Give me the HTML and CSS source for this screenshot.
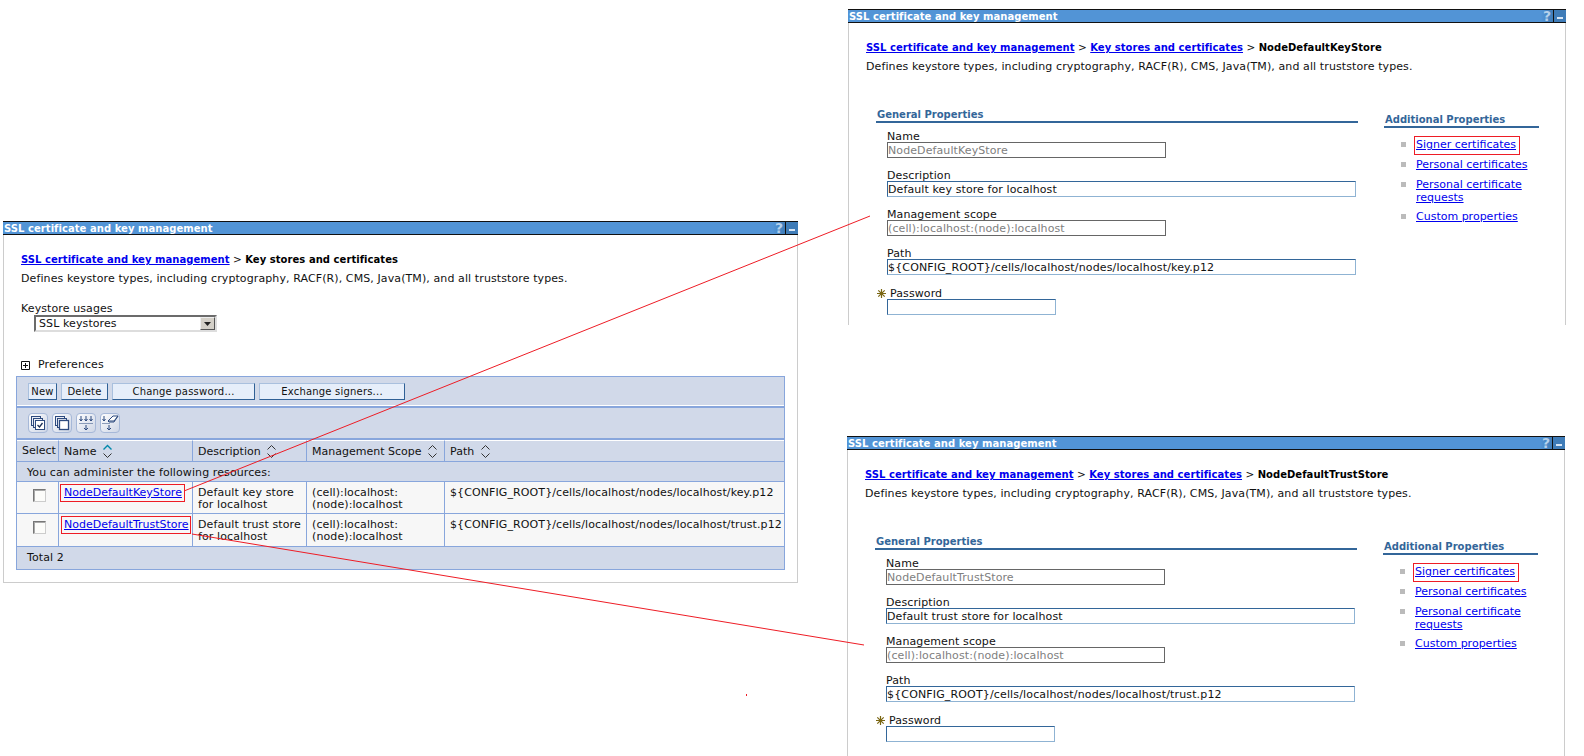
FILE: index.html
```html
<!DOCTYPE html>
<html lang="en">
<head>
<meta charset="utf-8">
<title>SSL certificate and key management</title>
<link rel="stylesheet" href="styles.css">
</head>
<body>
<svg width="0" height="0" class="defs">
  <defs>
    <symbol id="sort" viewBox="0 0 9 15"><path d="M.5 5.500 4.500 1.500l4 4M.5 9.500l4 4 4-4" fill="none" stroke="#333" stroke-width="1"/></symbol>
    <symbol id="sort-on" viewBox="0 0 9 15"><path d="M.5 5.500 4.500 1.500l4 4" fill="none" stroke="#08a" stroke-width="1.400"/><path d="M.5 9.500l4 4 4-4" fill="none" stroke="#333" stroke-width="1"/></symbol>
    <symbol id="star" viewBox="0 0 9 9"><path d="M4.500 0v9M0 4.500h9M1.300 1.300l6.400 6.400M7.700 1.300 1.300 7.700" stroke="#7a6612" stroke-width="1.200"/></symbol>
  </defs>
</svg>

<section class="panel panel-list">
  <header class="titlebar"><span class="title">SSL certificate and key management</span><span class="help">?</span><span class="min"></span></header>
  <div class="body">
    <p class="crumb"><a href="#">SSL certificate and key management</a> &gt; <b>Key stores and certificates</b></p>
    <p class="desc">Defines keystore types, including cryptography, RACF(R), CMS, Java(TM), and all truststore types.</p>
    <div class="usage-label">Keystore usages</div>
    <div class="select"><span class="select-text">SSL keystores</span><span class="select-btn"><svg width="7" height="4" viewBox="0 0 7 4"><path d="M0 0h7L3.500 4z" fill="#222"/></svg></span></div>
    <div class="prefs"><svg class="prefs-box" width="9" height="9" viewBox="0 0 9 9"><path d="M.5.5h8v8h-8zM2 4.500h5M4.500 2v5" fill="#fff" stroke="#111"/></svg>Preferences</div>
    <table class="coll">
      <colgroup><col class="c1"><col class="c2"><col class="c3"><col class="c4"><col class="c5"></colgroup>
      <tr class="tb1"><td colspan="5"><div class="btns">
        <button class="btn b-new">New</button><button class="btn b-del">Delete</button><button class="btn b-pw">Change password...</button><button class="btn b-ex">Exchange signers...</button>
      </div></td></tr>
      <tr class="tb2"><td colspan="5"><div class="icons">
        <span class="ico"><svg width="20" height="20" viewBox="0 0 20 20"><g fill="#e9edf6" stroke="#2d4a7e"><rect x="3.500" y="3.500" width="9" height="9"/><rect x="5.500" y="5.500" width="9" height="9"/></g><rect x="7.500" y="7.500" width="9" height="9" fill="#fff" stroke="#2d4a7e"/><path d="M9.500 12l2 2 3-4" fill="none" stroke="#1c2f55" stroke-width="1.300"/></svg></span>
        <span class="ico"><svg width="20" height="20" viewBox="0 0 20 20"><g fill="#e9edf6" stroke="#2d4a7e"><rect x="3.500" y="3.500" width="9" height="9"/><rect x="5.500" y="5.500" width="9" height="9"/></g><rect x="7.500" y="7.500" width="9" height="9" fill="#fff" stroke="#2d4a7e" stroke-width="1.300"/></svg></span>
        <span class="ico"><svg width="20" height="20" viewBox="0 0 20 20"><path d="M3.500 10.500h13" stroke="#2d4a7e" stroke-dasharray="1 1"/><path d="M5 3v5M3.500 6 5 8l1.500-2M10 3v5M8.500 6 10 8l1.500-2M15 3v5M13.500 6 15 8l1.500-2M10 12v5M8 15l2 2 2-2" fill="none" stroke="#2d4a7e"/></svg></span>
        <span class="ico"><svg width="20" height="20" viewBox="0 0 20 20"><path d="M2.500 10.500h8" stroke="#2d4a7e" stroke-dasharray="1 1"/><path d="M4 3v5M2.500 6 4 8l1.500-2M9 12v5M7 15l2 2 2-2" fill="none" stroke="#2d4a7e"/><path d="M8 8l5-5h5l-4 6H9z" fill="#fff" stroke="#2d4a7e"/><path d="M8 8h6l4-5" fill="none" stroke="#2d4a7e"/></svg></span>
      </div></td></tr>
      <tr class="head">
        <th class="th-sel">Select</th>
        <th>Name <svg class="sort" width="9" height="15"><use href="#sort-on"/></svg></th>
        <th>Description <svg class="sort" width="9" height="15"><use href="#sort"/></svg></th>
        <th>Management Scope <svg class="sort" width="9" height="15"><use href="#sort"/></svg></th>
        <th>Path <svg class="sort" width="9" height="15"><use href="#sort"/></svg></th>
      </tr>
      <tr class="msg"><td colspan="5">You can administer the following resources:</td></tr>
      <tr class="row">
        <td class="td-sel"><span class="check"></span></td>
        <td><a href="#">NodeDefaultKeyStore</a></td>
        <td>Default key store for localhost</td>
        <td>(cell):localhost:<br>(node):localhost</td>
        <td class="path">${CONFIG_ROOT}/cells/localhost/nodes/localhost/key.p12</td>
      </tr>
      <tr class="row">
        <td class="td-sel"><span class="check"></span></td>
        <td><a href="#">NodeDefaultTrustStore</a></td>
        <td>Default trust store for localhost</td>
        <td>(cell):localhost:<br>(node):localhost</td>
        <td class="path">${CONFIG_ROOT}/cells/localhost/nodes/localhost/trust.p12</td>
      </tr>
      <tr class="msg total"><td colspan="5">Total 2</td></tr>
    </table>
  </div>
</section>

<section class="panel panel-key">
  <header class="titlebar"><span class="title">SSL certificate and key management</span><span class="help">?</span><span class="min"></span></header>
  <div class="body open">
    <p class="crumb"><a href="#">SSL certificate and key management</a> &gt; <a href="#">Key stores and certificates</a> &gt; <b>NodeDefaultKeyStore</b></p>
    <p class="desc">Defines keystore types, including cryptography, RACF(R), CMS, Java(TM), and all truststore types.</p>
    <div class="cols">
      <div class="general">
        <h2 class="sec">General Properties</h2>
        <div class="fields">
          <div class="fld"><label>Name</label><div class="inp ro">NodeDefaultKeyStore</div></div>
          <div class="fld"><label>Description</label><div class="inp wide">Default key store for localhost</div></div>
          <div class="fld"><label>Management scope</label><div class="inp ro">(cell):localhost:(node):localhost</div></div>
          <div class="fld"><label>Path</label><div class="inp wide path-field">${CONFIG_ROOT}/cells/localhost/nodes/localhost/key.p12</div></div>
          <div class="fld pw"><label><svg class="star" width="9" height="9"><use href="#star"/></svg>Password</label><div class="inp short"></div></div>
        </div>
      </div>
      <div class="additional">
        <h2 class="sec">Additional Properties</h2>
        <ul class="links">
          <li><a href="#">Signer certificates</a></li>
          <li><a href="#">Personal certificates</a></li>
          <li><a href="#">Personal certificate<br>requests</a></li>
          <li><a href="#">Custom properties</a></li>
        </ul>
      </div>
    </div>
  </div>
</section>

<section class="panel panel-trust">
  <header class="titlebar"><span class="title">SSL certificate and key management</span><span class="help">?</span><span class="min"></span></header>
  <div class="body open">
    <p class="crumb"><a href="#">SSL certificate and key management</a> &gt; <a href="#">Key stores and certificates</a> &gt; <b>NodeDefaultTrustStore</b></p>
    <p class="desc">Defines keystore types, including cryptography, RACF(R), CMS, Java(TM), and all truststore types.</p>
    <div class="cols">
      <div class="general">
        <h2 class="sec">General Properties</h2>
        <div class="fields">
          <div class="fld"><label>Name</label><div class="inp ro">NodeDefaultTrustStore</div></div>
          <div class="fld"><label>Description</label><div class="inp wide">Default trust store for localhost</div></div>
          <div class="fld"><label>Management scope</label><div class="inp ro">(cell):localhost:(node):localhost</div></div>
          <div class="fld"><label>Path</label><div class="inp wide path-field">${CONFIG_ROOT}/cells/localhost/nodes/localhost/trust.p12</div></div>
          <div class="fld pw"><label><svg class="star" width="9" height="9"><use href="#star"/></svg>Password</label><div class="inp short"></div></div>
        </div>
      </div>
      <div class="additional">
        <h2 class="sec">Additional Properties</h2>
        <ul class="links">
          <li><a href="#">Signer certificates</a></li>
          <li><a href="#">Personal certificates</a></li>
          <li><a href="#">Personal certificate<br>requests</a></li>
          <li><a href="#">Custom properties</a></li>
        </ul>
      </div>
    </div>
  </div>
</section>

<svg class="notes" width="1584" height="756" viewBox="0 0 1584 756">
  <g fill="none" stroke="#ee1c25">
    <rect x="60.500" y="484.500" width="124" height="17"/>
    <rect x="61.500" y="516.500" width="129" height="17"/>
    <rect x="1414.500" y="136.500" width="105" height="18"/>
    <rect x="1413.500" y="563.500" width="105" height="18"/>
    <path d="M184 491 870 216M192 534 864 645M746.500 694v2"/>
  </g>
</svg>
</body>
</html>
```

FILE: styles.css
```css
* { box-sizing: border-box; }
html, body { margin: 0; padding: 0; background: #fff; }
body {
  position: relative;
  width: 1584px;
  height: 756px;
  overflow: hidden;
  font: 11px/12px "DejaVu Sans", Verdana, sans-serif;
  letter-spacing: .1px;
  color: #111;
}
.defs { position: absolute; }
a { color: #0000ee; text-decoration: underline; }
p { margin: 0; }
.path { letter-spacing: .1px; }
.path-field { letter-spacing: .15px; }

.panel { position: absolute; display: flex; flex-direction: column; }
.panel-list { left: 3px; top: 221px; width: 795px; height: 362px; }
.panel-key { left: 848px; top: 9px; width: 718px; height: 316px; }
.panel-trust { left: 847px; top: 436px; width: 718px; height: 320px; }

.titlebar {
  display: flex;
  align-items: stretch;
  height: 14px;
  flex: none;
  background: #5294d6;
  border-top: 1px solid #111;
  border-bottom: 1px solid #111;
  color: #fff;
  font-weight: bold;
  font-size: 10px;
  letter-spacing: .05px;
  line-height: 13px;
}
.title { flex: 1; padding-left: 1px; }
.help {
  width: 12px;
  text-align: center;
  background: linear-gradient(90deg, #5294d6, #3f7cb8);
  color: #b4d0ec;
  font-size: 14px;
  line-height: 12px;
}
.min {
  width: 13px;
  position: relative;
  border-left: 1px solid #111;
  background: #3f7cb8;
}
.min::after {
  content: "";
  position: absolute;
  left: 3px;
  bottom: 3px;
  width: 6px;
  height: 2px;
  background: #d8e6f5;
}

.body {
  flex: 1;
  padding: 17px 0 0 17px;
  border-left: 1px solid #ccc;
  border-right: 1px solid #ccc;
  border-bottom: 1px solid #ccc;
}
.body.open { border-bottom: 0; }
.crumb { height: 14px; line-height: 14px; font-size: 10.5px; letter-spacing: .05px; }
.crumb a, .crumb b { font-size: 10px; font-weight: bold; color: #000; }
.crumb a { color: #0000ee; }
.desc { margin-top: 6px; height: 14px; line-height: 14px; }

.usage-label { margin-top: 17px; height: 12px; }
.select {
  display: flex;
  width: 183px;
  height: 17px;
  margin-left: 13px;
  background: #fff;
  border: 2px solid;
  border-color: #6b6b6b #ddd #ddd #6b6b6b;
  line-height: 13px;
}
.select-text { flex: 1; padding-left: 3px; }
.select-btn {
  width: 15px;
  display: flex;
  align-items: center;
  justify-content: center;
  background: #d4d0c8;
  border: 1px solid;
  border-color: #eee #555 #555 #eee;
}
.prefs { display: flex; align-items: center; margin-top: 27px; height: 12px; }
.prefs-box { margin-right: 8px; }

.coll {
  display: table;
  table-layout: fixed;
  border-collapse: separate;
  border-spacing: 0;
  width: 769px;
  margin: 5px 0 0 -5px;
  border: 1px solid #88a6dc;
  background: #d1d9e9;
}
.c1 { width: 41px; }
.c2 { width: 134px; }
.c3 { width: 114px; }
.c4 { width: 138px; }
.c5 { width: auto; }
.coll td, .coll th {
  padding: 0;
  text-align: left;
  vertical-align: middle;
  font-weight: normal;
}
.tb1 td { height: 31px; border-bottom: 2px solid #88a6dc; box-shadow: inset 0 -1px 0 #fff; }
.tb2 td { height: 32px; border-bottom: 2px solid #88a6dc; }
.btns { display: flex; gap: 4px; padding-left: 11px; }
.btn {
  height: 17px;
  padding: 0;
  font: inherit;
  font-size: 10px;
  letter-spacing: .2px;
  color: #111;
  background: #e6eefa;
  border: 1px solid;
  border-color: #a9c0de #2f6096 #2f6096 #a9c0de;
  border-radius: 0;
}
.b-new { width: 29px; }
.b-del { width: 47px; }
.b-pw { width: 143px; }
.b-ex { width: 146px; }
.icons { display: flex; gap: 4px; padding-left: 11px; }
.ico {
  display: block;
  width: 20px;
  height: 20px;
  border: 1px solid #a6b8d8;
  border-radius: 4px;
  background: linear-gradient(135deg, #fdfdfe, #ced6e6);
  overflow: hidden;
}
.ico svg { display: block; margin: -1px; }
.head th {
  height: 22px;
  padding-left: 5px;
  letter-spacing: 0;
  border-left: 1px solid #88a6dc;
  border-bottom: 1px solid #88a6dc;
  border-top: 1px solid #fff;
  white-space: nowrap;
}
.head th:first-child { border-left: 0; }
.sort { vertical-align: -4px; margin-left: 3px; }
.msg td { height: 20px; padding: 2px 0 0 10px; border-bottom: 1px solid #88a6dc; }
.msg.total td { height: 23px; padding-top: 0; border-bottom: 0; border-top: 1px solid #88a6dc; }
.row td {
  height: 32px;
  padding: 5px 2px 0 5px;
  vertical-align: top;
  background: #f7f7f7;
  border-left: 1px solid #88a6dc;
  border-bottom: 1px solid #88a6dc;
}
.row a { letter-spacing: 0; }
.row:nth-last-child(2) td { border-bottom: 0; }
.row td:first-child { border-left: 0; }
.row .td-sel { padding: 7px 0 0 16px; }
.check {
  display: block;
  width: 13px;
  height: 13px;
  background: #fcfcfa;
  border: 1px solid;
  border-color: #777 #ccc #ccc #777;
  box-shadow: inset 1px 1px 0 #aaa;
}

.cols { display: flex; gap: 26px; margin-top: 35px; margin-left: 10px; }
.general { width: 482px; }
.additional { width: 155px; padding-top: 5px; }
.sec {
  margin: 0;
  height: 14px;
  padding-left: 1px;
  font-size: 10px;
  letter-spacing: 0;
  line-height: 12px;
  font-weight: bold;
  color: #336699;
  border-bottom: 2px solid #336699;
}
.fields { display: flex; flex-direction: column; gap: 11px; margin-top: 7px; padding-left: 11px; }
.fld label { display: block; height: 12px; line-height: 13px; }
.pw { margin-top: 1px; }
.pw label { position: relative; padding-left: 3px; }
.star { position: absolute; left: -10px; top: 2px; }
.inp {
  height: 16px;
  width: 469px;
  padding-left: 0;
  line-height: 16px;
  white-space: nowrap;
  overflow: hidden;
  border: 1px solid;
  border-color: #336699 #8fb3d3 #8fb3d3 #336699;
  background: #fff;
}
.inp.ro { width: 279px; border-color: #666; color: #808080; }
.inp.short { width: 169px; }
.links { list-style: none; margin: 10px 0 0; padding: 0; display: flex; flex-direction: column; gap: 7px; letter-spacing: 0; }
.links li {
  position: relative;
  padding-left: 32px;
  line-height: 13px;
}
.links li:last-child { margin-top: -1px; }
.links li::before {
  content: "";
  position: absolute;
  left: 17px;
  top: 4px;
  width: 5px;
  height: 5px;
  background: #bbb;
}

.notes { position: absolute; left: 0; top: 0; pointer-events: none; }
```
